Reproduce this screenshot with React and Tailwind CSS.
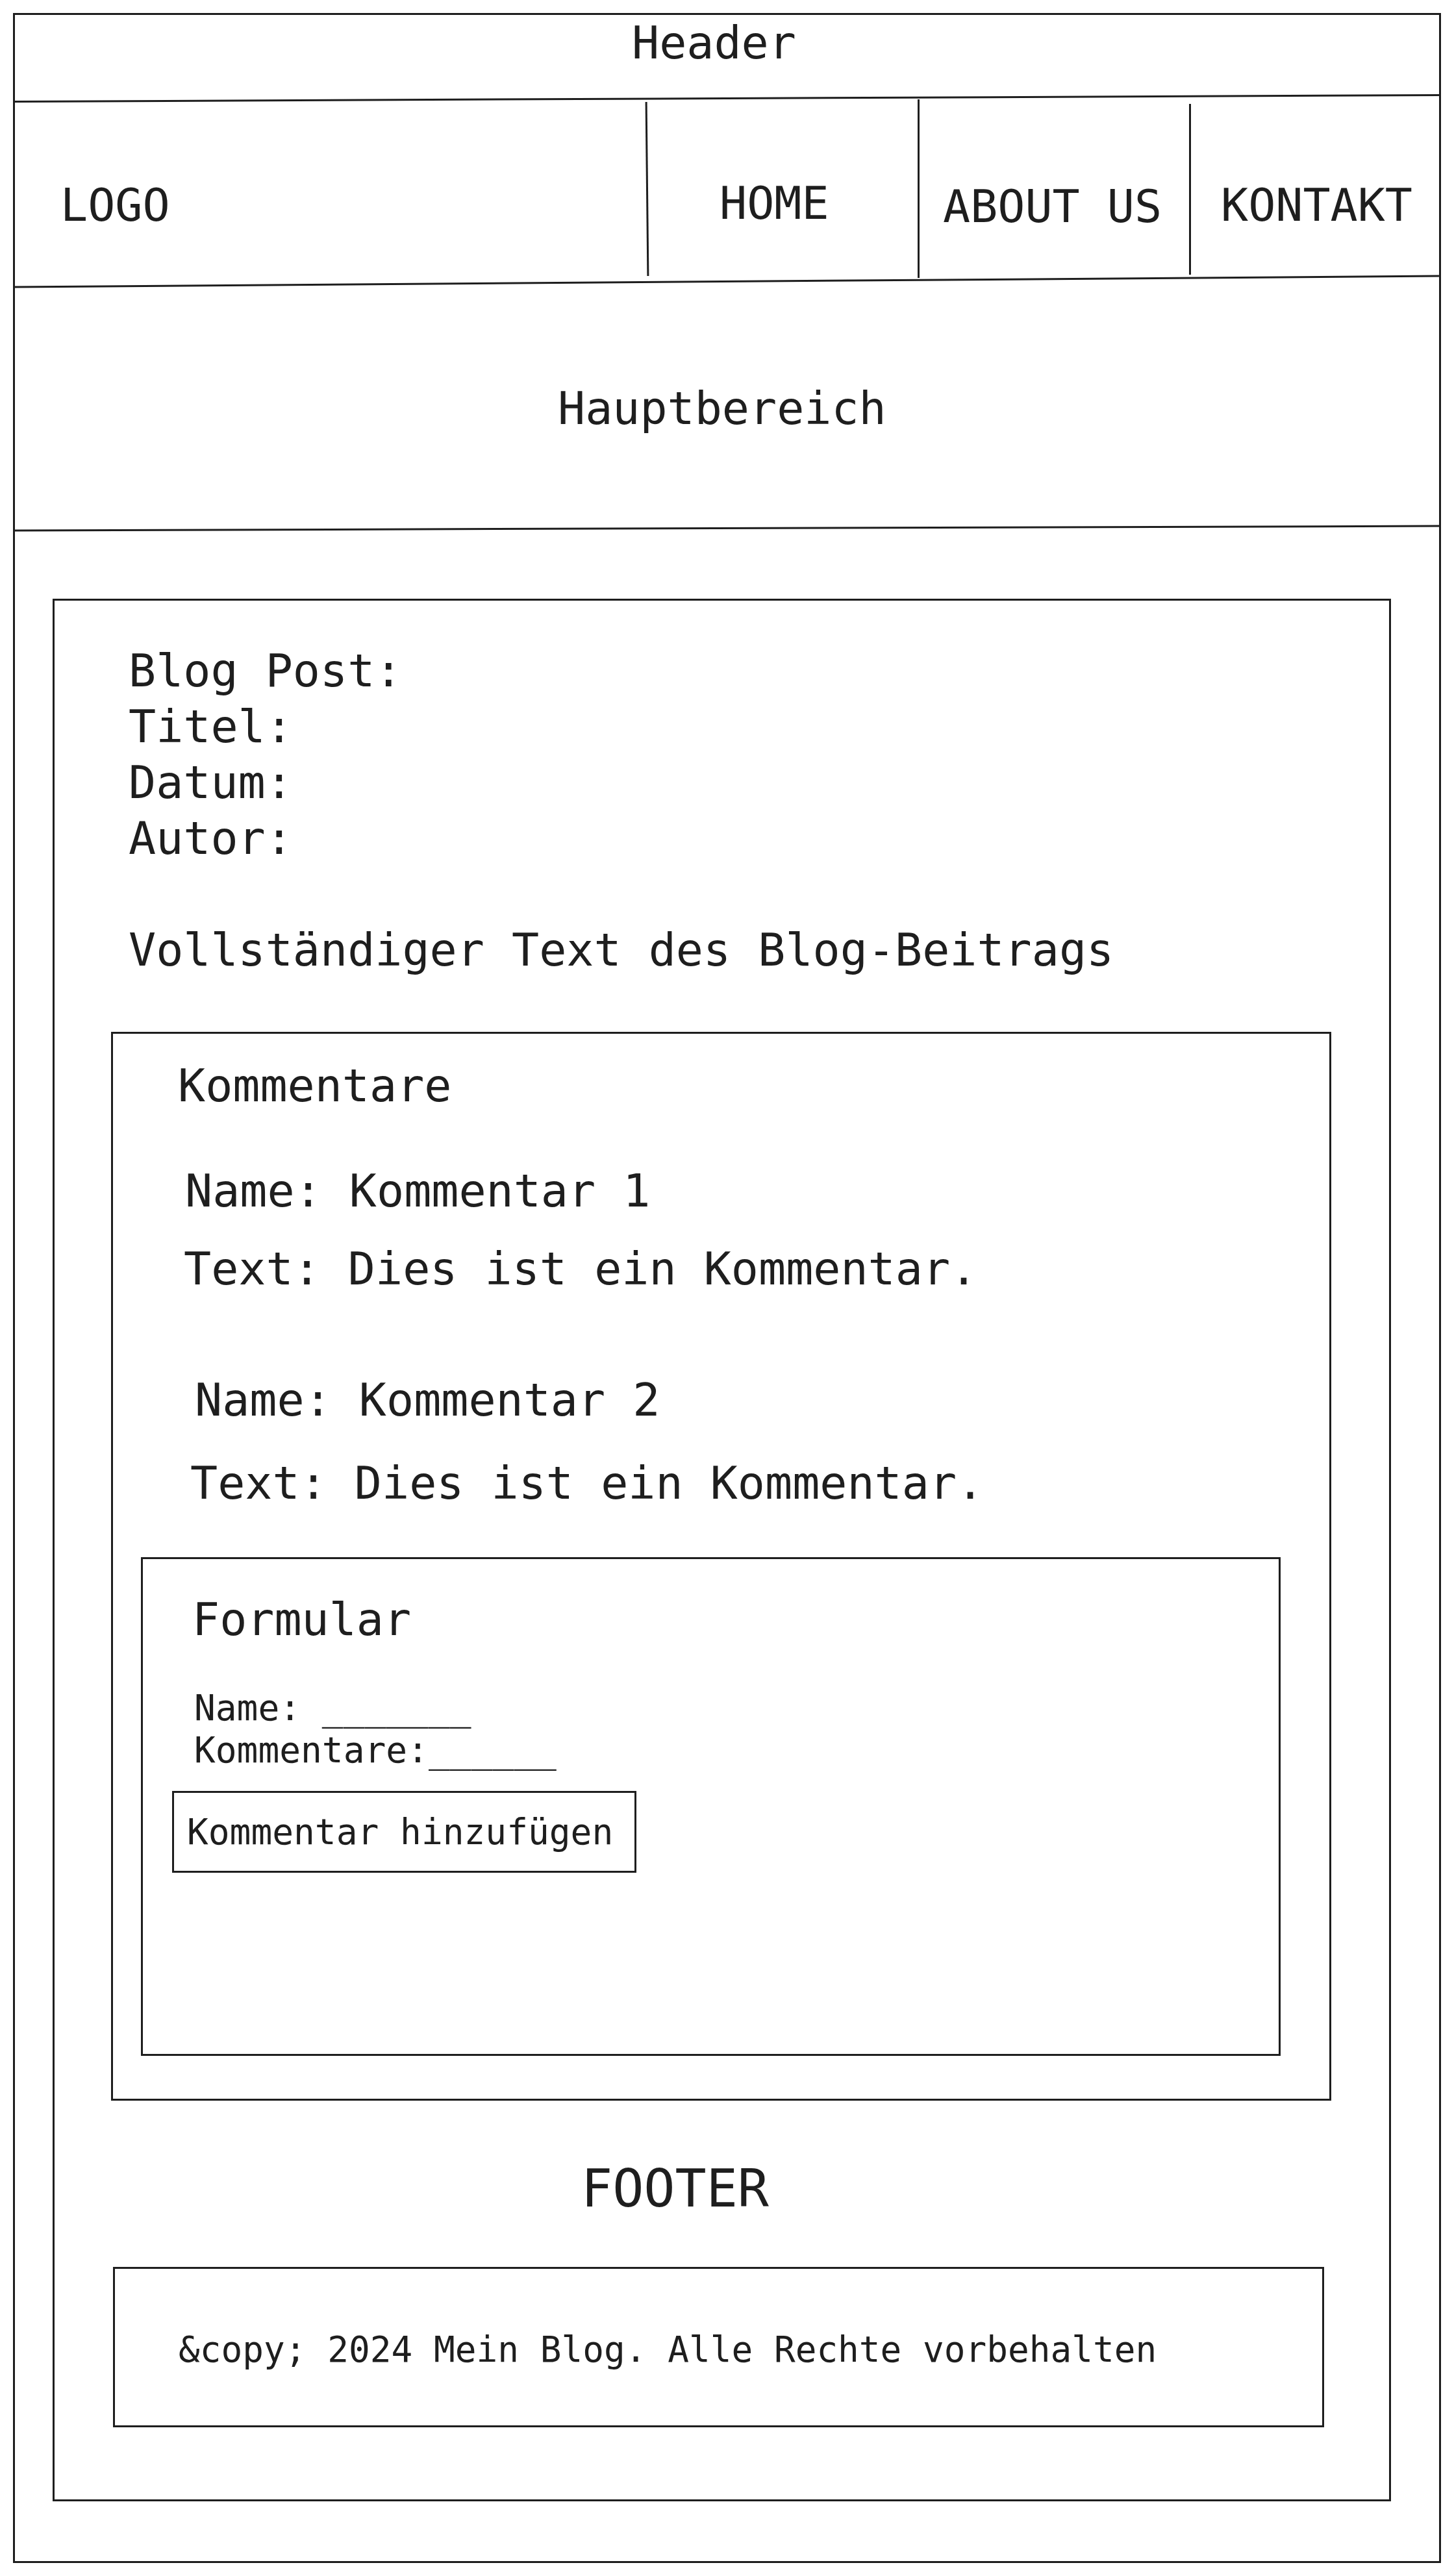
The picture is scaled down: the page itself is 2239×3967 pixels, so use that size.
export default function App() {
  return (
    <div className="w-[2239px] h-[3967px] bg-white pt-[20px] pl-[20px] font-['DejaVu_Sans_Mono',monospace] text-[#1e1e1e]">
      <div className="w-[2199px] h-[3927px] border-[3px] border-[#1e1e1e] flex flex-col overflow-hidden">
        {/* Header */}
        <div className="h-[127px] shrink-0 pl-[950px] text-[70px] leading-[86px]">Header</div>
        <div className="h-[3px] shrink-0 bg-[#1e1e1e] rotate-[-0.26deg]" />

        {/* Navigation */}
        <div className="h-[279px] shrink-0 flex text-[70px] leading-[86px]">
          <div className="w-[972px] shrink-0 pl-[70px] pt-[120px]">LOGO</div>
          <div className="w-[3px] shrink-0 mt-[4px] h-[268px] bg-[#1e1e1e] rotate-[-0.6deg]" />
          <div className="w-[415px] shrink-0 pl-[110px] pt-[117px]">HOME</div>
          <div className="w-[3px] shrink-0 h-[275px] bg-[#1e1e1e]" />
          <div className="w-[415px] shrink-0 pl-[36px] pt-[122px] whitespace-pre">ABOUT US</div>
          <div className="w-[3px] shrink-0 mt-[7px] h-[263px] bg-[#1e1e1e]" />
          <div className="flex-1 pl-[46px] pt-[120px]">KONTAKT</div>
        </div>
        <div className="h-[3px] shrink-0 bg-[#1e1e1e] rotate-[-0.44deg]" />

        {/* Hauptbereich */}
        <div className="h-[377px] shrink-0 pl-[836px] pt-[151px] text-[70px] leading-[86px]">Hauptbereich</div>
        <div className="h-[3px] shrink-0 bg-[#1e1e1e] rotate-[-0.18deg]" />

        {/* Blog box */}
        <div className="ml-[58px] mt-[107px] w-[2061px] h-[2930px] shrink-0 border-[3px] border-[#1e1e1e] flex flex-col">
          <div className="pt-[65px] pl-[114px] text-[70px] leading-[86px] whitespace-pre">
            <div>Blog Post:</div>
            <div>Titel:</div>
            <div>Datum:</div>
            <div>Autor:</div>
            <div className="h-[86px]" />
            <div>Vollständiger Text des Blog-Beitrags</div>
          </div>

          {/* Kommentare */}
          <div className="ml-[87px] mt-[83px] w-[1879px] h-[1646px] shrink-0 border-[3px] border-[#1e1e1e] flex flex-col text-[70px] leading-[86px] whitespace-pre">
            <div className="mt-[37px] ml-[100px]">Kommentare</div>
            <div className="mt-[76px] ml-[111px]">Name: Kommentar 1</div>
            <div className="mt-[34px] ml-[109px]">Text: Dies ist ein Kommentar.</div>
            <div className="mt-[116px] ml-[126px]">Name: Kommentar 2</div>
            <div className="mt-[42px] ml-[119px]">Text: Dies ist ein Kommentar.</div>

            {/* Formular */}
            <div className="mt-[71px] ml-[43px] w-[1755px] h-[768px] shrink-0 border-[3px] border-[#1e1e1e] flex flex-col">
              <div className="mt-[50px] ml-[76px]">Formular</div>
              <div className="mt-[61px] ml-[79px] text-[54.5px] leading-[65px]">
                <div>Name: _______</div>
                <div>Kommentare:______</div>
              </div>
              <div className="mt-[30px] ml-[45px] w-[715px] h-[126px] shrink-0 border-[3px] border-[#1e1e1e] pt-[27px] pl-[20px] text-[54.5px] leading-[66px]">
                Kommentar hinzufügen
              </div>
            </div>
          </div>

          {/* Footer */}
          <div className="mt-[86px] ml-[811px] text-[80px] leading-[100px]">FOOTER</div>
          <div className="mt-[70px] ml-[90px] w-[1865px] h-[247px] shrink-0 border-[3px] border-[#1e1e1e] pt-[92px] pl-[98px] text-[54.4px] leading-[66px] whitespace-pre">
            {"&copy; 2024 Mein Blog. Alle Rechte vorbehalten"}
          </div>
        </div>
      </div>
    </div>
  );
}
